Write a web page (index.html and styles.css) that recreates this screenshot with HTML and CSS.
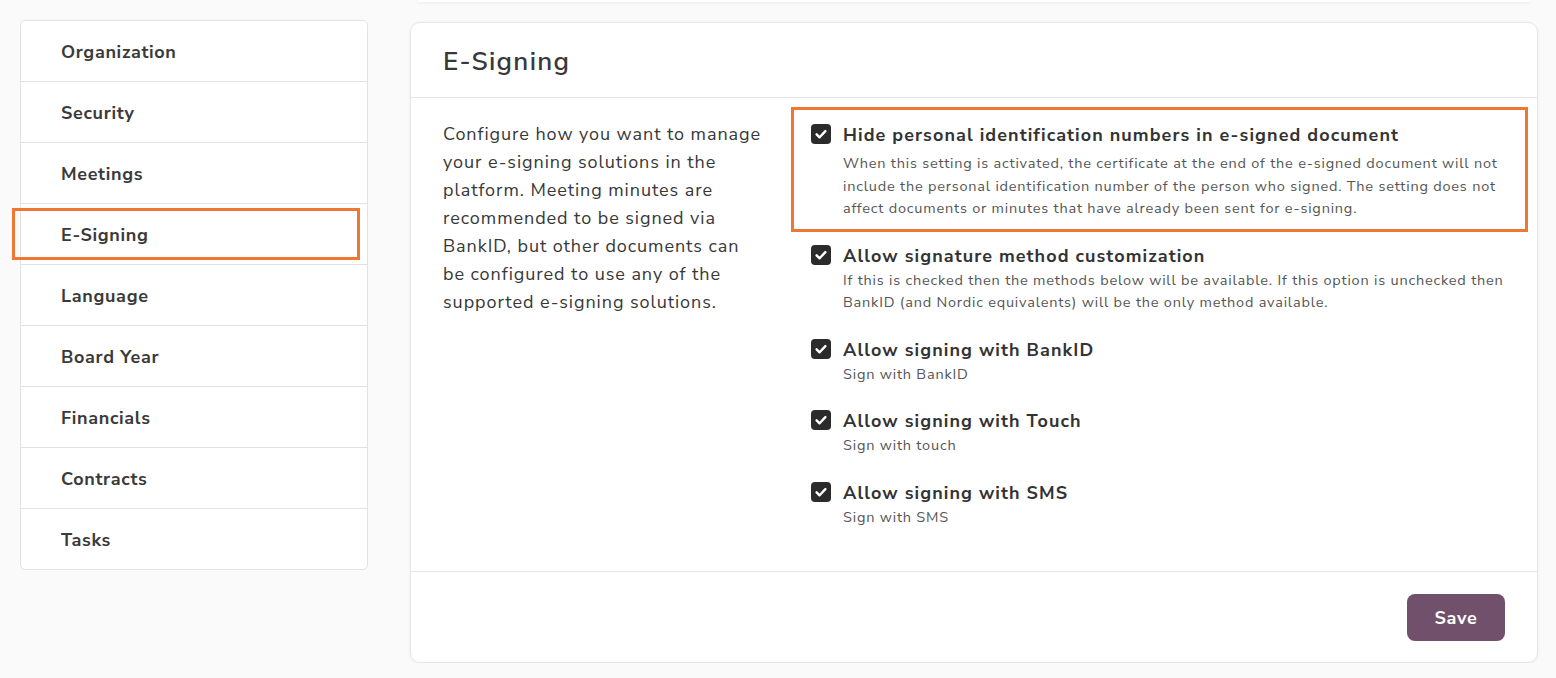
FILE: index.html
```html
<!DOCTYPE html>
<html lang="en">
<head>
<meta charset="utf-8">
<title>E-Signing settings</title>
<link rel="stylesheet" href="styles.css">
</head>
<body>
<div class="page">
  <nav class="sidebar">
    <div class="nav-item">Organization</div>
    <div class="nav-item">Security</div>
    <div class="nav-item">Meetings</div>
    <div class="nav-item active">E-Signing<span class="mark mark-nav"></span></div>
    <div class="nav-item">Language</div>
    <div class="nav-item">Board Year</div>
    <div class="nav-item">Financials</div>
    <div class="nav-item">Contracts</div>
    <div class="nav-item">Tasks</div>
  </nav>
  <main class="main">
    <div class="prev-card"></div>
    <section class="card">
      <header class="card-header"><h1>E-Signing</h1></header>
      <div class="card-body">
        <p class="intro">Configure how you want to manage your e-signing solutions in the platform. Meeting minutes are recommended to be signed via BankID, but other documents can be configured to use any of the supported e-signing solutions.</p>
        <div class="options">
          <div class="option option-first">
            <span class="mark mark-opt"></span>
            <span class="check"><svg viewBox="0 0 20 20"><path d="M5.6 10.3l3 3 5.8-6.2" /></svg></span>
            <div class="opt-text">
              <div class="opt-title">Hide personal identification numbers in e-signed document</div>
              <div class="opt-desc">When this setting is activated, the certificate at the end of the e-signed document will not include the personal identification number of the person who signed. The setting does not affect documents or minutes that have already been sent for e-signing.</div>
            </div>
          </div>
          <div class="option">
            <span class="check"><svg viewBox="0 0 20 20"><path d="M5.6 10.3l3 3 5.8-6.2" /></svg></span>
            <div class="opt-text">
              <div class="opt-title">Allow signature method customization</div>
              <div class="opt-desc">If this is checked then the methods below will be available. If this option is unchecked then BankID (and Nordic equivalents) will be the only method available.</div>
            </div>
          </div>
          <div class="option">
            <span class="check"><svg viewBox="0 0 20 20"><path d="M5.6 10.3l3 3 5.8-6.2" /></svg></span>
            <div class="opt-text">
              <div class="opt-title">Allow signing with BankID</div>
              <div class="opt-desc">Sign with BankID</div>
            </div>
          </div>
          <div class="option">
            <span class="check"><svg viewBox="0 0 20 20"><path d="M5.6 10.3l3 3 5.8-6.2" /></svg></span>
            <div class="opt-text">
              <div class="opt-title">Allow signing with Touch</div>
              <div class="opt-desc">Sign with touch</div>
            </div>
          </div>
          <div class="option">
            <span class="check"><svg viewBox="0 0 20 20"><path d="M5.6 10.3l3 3 5.8-6.2" /></svg></span>
            <div class="opt-text">
              <div class="opt-title">Allow signing with SMS</div>
              <div class="opt-desc">Sign with SMS</div>
            </div>
          </div>
        </div>
      </div>
      <footer class="card-footer"><button class="save">Save</button></footer>
    </section>
  </main>
</div>
</body>
</html>
```
FILE: styles.css
```css
* { box-sizing: border-box; }
html, body { margin: 0; padding: 0; background: #fafafa; }
body {
  font-family: "Nunito Sans", Lato, "Noto Sans", sans-serif;
  color: #333;
  overflow: hidden;
}
.page {
  display: flex;
  align-items: flex-start;
  gap: 42px;
  padding: 0 18px 0 20px;
}
.sidebar {
  width: 348px;
  flex: none;
  margin-top: 20px;
  background: #fff;
  border: 1px solid #e2e2e2;
  border-radius: 5px;
}
.nav-item {
  position: relative;
  height: 61px;
  display: flex;
  align-items: center;
  padding: 2px 0 0 40px;
  font-size: 18px;
  font-weight: 700;
  letter-spacing: 0.037em;
  color: #3a3a3a;
  border-top: 1px solid #e2e2e2;
}
.nav-item:first-child { border-top: none; height: 60px; }
.mark {
  position: absolute;
  border: 3px solid #ee7833;
  pointer-events: none;
}
.mark-nav { left: -9px; right: 7px; top: 4px; bottom: 4px; }
.main { flex: 1; min-width: 0; }
.prev-card {
  height: 2px;
  margin: 0 8px 20px;
  background: #fff;
  box-shadow: 0 1px 3px rgba(0,0,0,0.08);
}
.card {
  background: #fff;
  border: 1px solid #e6e6e6;
  border-radius: 10px;
  box-shadow: 0 1px 4px rgba(0,0,0,0.04);
}
.card-header {
  height: 75px;
  display: flex;
  align-items: center;
  padding: 2px 0 0 32px;
  border-bottom: 1px solid #e6e6e6;
}
.card-header h1 {
  margin: 0;
  font-size: 26px;
  font-weight: 600;
  letter-spacing: 0.05em;
  color: #383838;
}
.card-body {
  display: flex;
  padding: 22px 32px 43px;
  gap: 46px;
}
.intro {
  width: 322px;
  flex: none;
  margin: 0;
  font-size: 18px;
  line-height: 28px;
  letter-spacing: 0.052em;
  color: #383838;
}
.options {
  flex: 1;
  display: flex;
  flex-direction: column;
  gap: 25px;
  padding-top: 4px;
}
.option {
  position: relative;
  display: flex;
  gap: 12px;
}
.mark-opt { left: -20px; right: -23px; top: -17px; bottom: -12px; }
.check {
  flex: none;
  width: 20px;
  height: 20px;
  border-radius: 4px;
  background: #2b2b2b;
  display: flex;
}
.check svg { width: 20px; height: 20px; }
.check path { fill: none; stroke: #fff; stroke-width: 2.4; stroke-linecap: round; stroke-linejoin: round; }
.opt-text { flex: 1; }
.opt-title {
  font-size: 18px;
  font-weight: 700;
  line-height: 22px;
  letter-spacing: 0.06em;
  color: #333;
}
.opt-desc {
  margin-top: 2px;
  font-size: 14.5px;
  line-height: 22.5px;
  letter-spacing: 0.055em;
  color: #555;
}
.option-first .opt-desc { margin-top: 6px; }
.card-footer {
  display: flex;
  justify-content: flex-end;
  padding: 22px 32px 21px;
  border-top: 1px solid #e6e6e6;
}
.save {
  width: 98px;
  height: 47px;
  border: none;
  border-radius: 8px;
  background: #71506b;
  color: #fff;
  font-family: inherit;
  font-size: 18px;
  font-weight: 700;
  letter-spacing: 0.04em;
}
```
